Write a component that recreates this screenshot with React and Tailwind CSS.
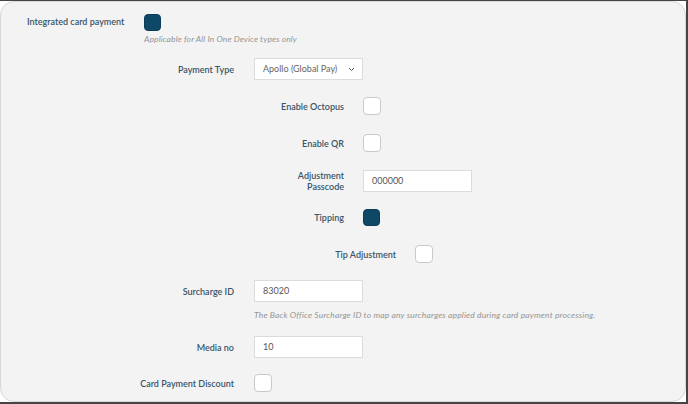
import React from "react";

const font = { fontFamily: "Lato, 'Open Sans', sans-serif" };

function Box({ checked }) {
  return checked ? (
    <div className="h-[17px] w-[17px] rounded-[4px] bg-[#0d4866] border border-[#0b3d57]" />
  ) : (
    <div className="h-[18px] w-[18px] rounded-[4px] bg-white border border-[#c9c9c9]" />
  );
}

function Label({ w, children, className = "" }) {
  return (
    <div
      className={`shrink-0 text-right text-[9px] font-semibold leading-[11px] text-[#3a5567] ${className}`}
      style={{ width: w }}
    >
      {children}
    </div>
  );
}

function Input({ value, w = 109 }) {
  return (
    <div
      className="h-[22px] bg-white border border-[#dcdcdc] flex items-center pl-[8px] text-[9px] text-[#555]"
      style={{ width: w }}
    >
      {value}
    </div>
  );
}

export default function App() {
  return (
    <div className="w-[688px] h-[404px] bg-white overflow-hidden border-t border-r-2 border-b-2 border-[#454545]" style={font}>
      <div className="h-full w-full rounded-[14px] border border-[#d8d8d8] bg-[#f3f3f3] flex flex-col pt-[11px]">
        {/* Row 1 */}
        <div className="flex items-center h-[18px]">
          <div className="w-[143px] shrink-0 pl-[26px] text-[9px] font-semibold text-[#3a5567]">
            Integrated card payment
          </div>
          <Box checked />
        </div>
        <div className="mt-[2px] h-[12px] pl-[143px] text-[8.5px] italic leading-[12px] tracking-[0.1px] text-[#959595]">
          Applicable for All In One Device types only
        </div>

        {/* Payment Type */}
        <div className="mt-[13px] flex items-center h-[22px]">
          <Label w={233}>Payment Type</Label>
          <div className="ml-[20px] h-[22px] w-[109px] bg-white border border-[#dcdcdc] flex items-center justify-between pl-[8px] pr-[7px] text-[9px] text-[#666]">
            <span>Apollo (Global Pay)</span>
            <svg width="7" height="5" viewBox="0 0 7 5" fill="none">
              <path d="M1 1l2.5 2.5L6 1" stroke="#555" strokeWidth="1" />
            </svg>
          </div>
        </div>

        {/* Enable Octopus */}
        <div className="mt-[17px] flex items-center h-[18px]">
          <Label w={343}>Enable Octopus</Label>
          <div className="ml-[19px]"><Box /></div>
        </div>

        {/* Enable QR */}
        <div className="mt-[19px] flex items-center h-[18px]">
          <Label w={343}>Enable QR</Label>
          <div className="ml-[19px]"><Box /></div>
        </div>

        {/* Adjustment Passcode */}
        <div className="mt-[18px] flex items-center h-[22px]">
          <Label w={343}>
            Adjustment
            <br />
            Passcode
          </Label>
          <div className="ml-[19px]"><Input value="000000" /></div>
        </div>

        {/* Tipping */}
        <div className="mt-[16px] flex items-center h-[18px]">
          <Label w={343}>Tipping</Label>
          <div className="ml-[19px]"><Box checked /></div>
        </div>

        {/* Tip Adjustment */}
        <div className="mt-[19px] flex items-center h-[18px]">
          <Label w={395}>Tip Adjustment</Label>
          <div className="ml-[19px]"><Box /></div>
        </div>

        {/* Surcharge ID */}
        <div className="mt-[17px] flex items-center h-[22px]">
          <Label w={233}>Surcharge ID</Label>
          <div className="ml-[20px]"><Input value="83020" /></div>
        </div>
        <div className="mt-[7px] h-[12px] pl-[253px] text-[8.5px] italic leading-[12px] tracking-[0.15px] text-[#959595]">
          The Back Office Surcharge ID to map any surcharges applied during card payment processing.
        </div>

        {/* Media no */}
        <div className="mt-[15px] flex items-center h-[22px]">
          <Label w={233}>Media no</Label>
          <div className="ml-[20px]"><Input value="10" /></div>
        </div>

        {/* Card Payment Discount */}
        <div className="mt-[16px] flex items-center h-[18px]">
          <Label w={233}>Card Payment Discount</Label>
          <div className="ml-[20px]"><Box /></div>
        </div>
      </div>
    </div>
  );
}
